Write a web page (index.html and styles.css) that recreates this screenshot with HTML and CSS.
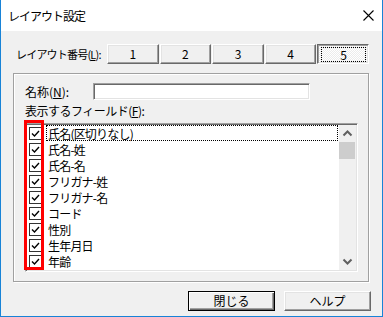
FILE: index.html
```html
<!DOCTYPE html>
<html lang="ja">
<head>
    <meta charset="UTF-8">
    <title>レイアウト設定</title>
    <link rel="stylesheet" href="styles.css">
</head>
<body>
    <div class="window">
        <!-- Title bar -->
        <div class="titlebar">
            <span class="title">レイアウト設定</span>
            <svg class="close" width="11" height="11" viewBox="0 0 11 11">
                <path d="M0.5 0.5 L10.5 10.5 M10.5 0.5 L0.5 10.5" stroke="#000" stroke-width="1.1" fill="none"/>
            </svg>
        </div>

        <div class="content">
            <!-- Layout number buttons -->
            <div class="layout-row">
                <span class="row-label">レイアウト番号(<u>L</u>):</span>
                <div class="layout-buttons">
                    <button class="btn">1</button>
                    <button class="btn">2</button>
                    <button class="btn">3</button>
                    <button class="btn">4</button>
                    <button class="btn pressed"><span class="focus">5</span></button>
                </div>
            </div>

            <!-- Group box -->
            <div class="group">
                <div class="name-row">
                    <span class="name-label">名称(<u>N</u>):</span>
                    <div class="textbox"></div>
                </div>

                <div class="field-label">表示するフィールド(<u>F</u>):</div>

                <div class="listbox">
                    <div class="items">
                        <div class="item"><span class="check"></span><span class="text focus-row">氏名(区切りなし)</span></div>
                        <div class="item"><span class="check"></span><span class="text">氏名-姓</span></div>
                        <div class="item"><span class="check"></span><span class="text">氏名-名</span></div>
                        <div class="item"><span class="check"></span><span class="text">フリガナ-姓</span></div>
                        <div class="item"><span class="check"></span><span class="text">フリガナ-名</span></div>
                        <div class="item"><span class="check"></span><span class="text">コード</span></div>
                        <div class="item"><span class="check"></span><span class="text">性別</span></div>
                        <div class="item"><span class="check"></span><span class="text">生年月日</span></div>
                        <div class="item"><span class="check"></span><span class="text">年齢</span></div>
                    </div>
                    <div class="scrollbar">
                        <div class="arrow">
                            <svg width="17" height="17" viewBox="0 0 17 17"><polyline points="4.5,10.5 8.5,6.5 12.5,10.5" stroke="#606060" stroke-width="2" fill="none"/></svg>
                        </div>
                        <div class="thumb"></div>
                        <div class="track"></div>
                        <div class="arrow">
                            <svg width="17" height="17" viewBox="0 0 17 17"><polyline points="4.5,6.5 8.5,10.5 12.5,6.5" stroke="#606060" stroke-width="2" fill="none"/></svg>
                        </div>
                    </div>
                    <!-- Annotation -->
                    <div class="highlight"></div>
                </div>
            </div>

            <!-- Footer buttons -->
            <div class="footer">
                <button class="btn wide default">閉じる</button>
                <button class="btn wide">ヘルプ</button>
            </div>
        </div>
    </div>
</body>
</html>
```

FILE: styles.css
```css
/* Basic Reset */
body {
    margin: 0;
    padding: 0;
    font-family: 'Noto Sans CJK JP', 'Noto Sans', sans-serif;
    font-size: 12px;
    color: #000;
}

/* Window */
.window {
    width: 383px;
    height: 317px;
    box-sizing: border-box;
    border: 1px solid #1883d7;
    border-top: none;
    background: #f0f0f0;
}

.titlebar {
    height: 31px;
    background: #fff;
    display: flex;
    align-items: center;
    justify-content: space-between;
    padding: 0 8px 0 7px;
}

.title {
    font-size: 12px;
    line-height: 14px;
    letter-spacing: -1px;
}

.content {
    padding: 0 11px 0 12px;
}

/* Layout number row */
.layout-row {
    display: flex;
    align-items: center;
    margin: 13px 0 0 3px;
    height: 20px;
}

.row-label {
    width: 91px;
    flex-shrink: 0;
    white-space: nowrap;
    font-size: 11px;
    letter-spacing: -0.8px;
    line-height: 14px;
}

.layout-buttons {
    display: grid;
    grid-template-columns: repeat(5, 1fr);
    gap: 1px;
    width: 262px;
    height: 20px;
}

/* Classic buttons */
.btn {
    font-family: inherit;
    font-size: 12px;
    line-height: 14px;
    color: #000;
    background: #f0f0f0;
    border: 1px solid;
    border-color: #fff #696969 #696969 #fff;
    box-shadow: inset -1px -1px 0 #a0a0a0, inset 1px 1px 0 #e3e3e3;
    padding: 0;
    margin: 0;
    height: 20px;
    display: flex;
    align-items: center;
    justify-content: center;
}

.btn.pressed {
    border-color: #696969 #fff #fff #696969;
    box-shadow: inset 1px 1px 0 #a0a0a0, inset -1px -1px 0 #e3e3e3;
    background: repeating-conic-gradient(#fff 0 25%, #ececec 0 50%) 0 0 / 2px 2px;
    padding: 2px 2px 1px 3px;
}

.btn .focus {
    flex: 1;
    align-self: stretch;
    display: flex;
    align-items: center;
    justify-content: center;
    border: 1px dotted #000;
}

/* Group box */
.group {
    margin-top: 9px;
    width: 356px;
    height: 209px;
    box-sizing: border-box;
    border: 1px solid #a0a0a0;
    box-shadow: inset 1px 1px 0 #fff, 1px 1px 0 #fff;
    padding: 9px 0 0 11px;
}

.name-row {
    display: flex;
    align-items: center;
    height: 17px;
}

.name-label {
    width: 68px;
    line-height: 14px;
}

.textbox {
    width: 217px;
    height: 17px;
    box-sizing: border-box;
    background: #fff;
    border: 1px solid;
    border-color: #a0a0a0 #fff #fff #a0a0a0;
    box-shadow: inset 1px 1px 0 #696969, inset -1px -1px 0 #e3e3e3;
}

.field-label {
    margin: 3px 0 4px;
    line-height: 16px;
    letter-spacing: -0.5px;
}

/* List box */
.listbox {
    position: relative;
    display: flex;
    width: 333px;
    height: 149px;
    box-sizing: border-box;
    background: #fff;
    border: 1px solid;
    border-color: #a0a0a0 #fff #fff #a0a0a0;
    box-shadow: inset 1px 1px 0 #696969, inset -1px -1px 0 #e3e3e3;
    padding: 1px;
}

.items {
    flex: 1;
    padding: 0 1px 0 2px;
}

.item {
    display: flex;
    align-items: center;
    height: 16px;
}

.check {
    width: 13px;
    height: 13px;
    flex-shrink: 0;
    box-sizing: border-box;
    border: 1px solid #333;
    background: #fff url("data:image/svg+xml;utf8,<svg xmlns='http://www.w3.org/2000/svg' width='11' height='11'><polyline points='2,5.5 4.5,8 9,3' stroke='black' stroke-width='1.4' fill='none'/></svg>") no-repeat center;
    margin-right: 4px;
}

.text {
    flex: 1;
    height: 16px;
    line-height: 15px;
    box-sizing: border-box;
    padding-left: 1px;
    border: 1px solid transparent;
    white-space: nowrap;
    letter-spacing: -0.8px;
}

.text.focus-row {
    border: 1px dotted #000;
}

.scrollbar {
    width: 17px;
    display: flex;
    flex-direction: column;
    background: #f0f0f0;
}

.arrow {
    height: 17px;
}

.arrow svg {
    display: block;
}

.thumb {
    height: 17px;
    margin: 0 1px 0 0;
    background: #cdcdcd;
}

.track {
    flex: 1;
}

.highlight {
    position: absolute;
    left: -2px;
    top: -4px;
    width: 20px;
    height: 150px;
    box-sizing: border-box;
    border: 3px solid #ff0000;
}

/* Footer */
.footer {
    display: flex;
    justify-content: flex-end;
    gap: 9px;
    margin-top: 9px;
}

.btn.wide {
    width: 87px;
}

.btn.default {
    border: 1px solid #000;
    box-shadow: inset 1px 1px 0 #fff, inset -1px -1px 0 #696969, inset -2px -2px 0 #a0a0a0;
}
```
